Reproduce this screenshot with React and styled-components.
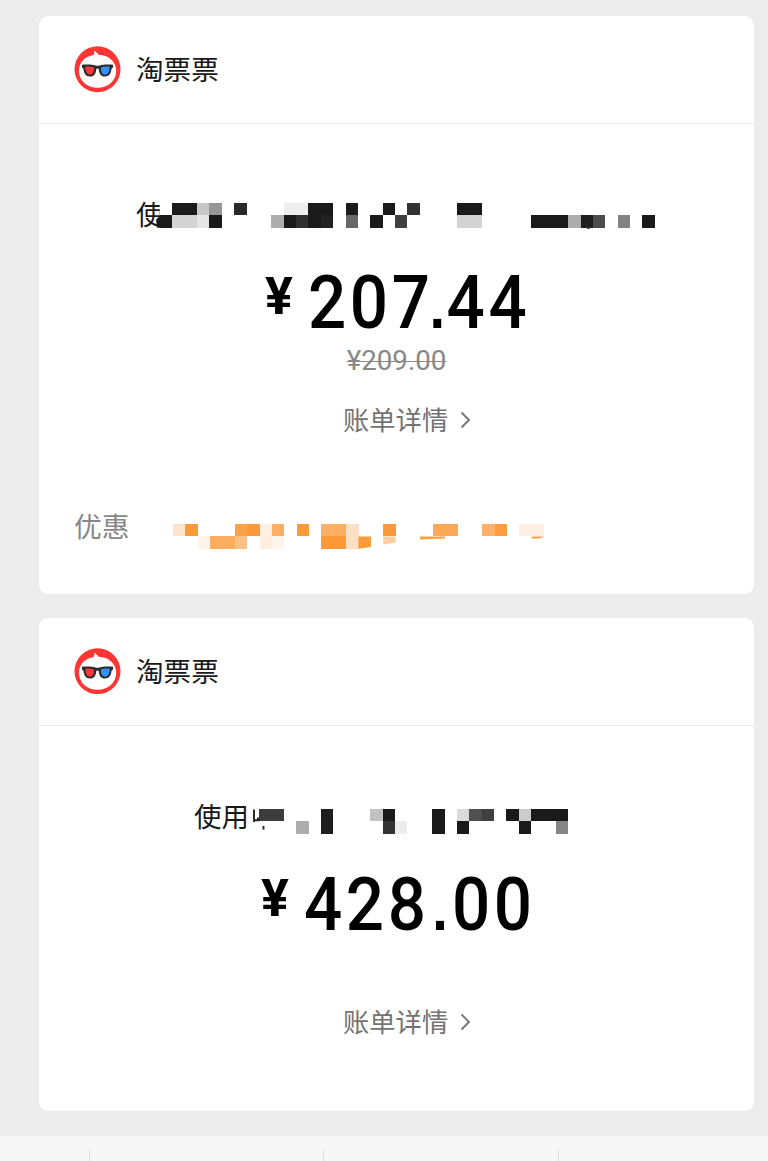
import React from 'react'
import styled, { createGlobalStyle } from 'styled-components'

const GlobalStyle = createGlobalStyle`
    * {
        box-sizing: border-box;
    }

    body {
        margin: 0;
        background: #ececec;
        font-family: "Noto Sans CJK SC", sans-serif;
    }
`

const Page = styled.main`
    display: flex;
    flex-direction: column;
    height: 1161px;
    overflow: hidden;
    background: #ececec;
`

const CardList = styled.div`
    display: flex;
    flex-direction: column;
    gap: 24px;
    height: 1136px;
    padding: 16px 14px 0 39px;
`

const Card = styled.section`
    height: ${props => props.$height}px;
    border-radius: 9px;
    background: #fff;
    overflow: hidden;
`

const CardHeader = styled.header`
    display: flex;
    align-items: center;
    gap: 15px;
    height: 108px;
    padding-left: 35px;
    border-bottom: 1px solid #e8e8e8;
`

const Merchant = styled.h2`
    margin: -3px 0 0;
    color: #191919;
    font-size: 27.6px;
    font-weight: 400;
    line-height: 40px;
`

const Description = styled.div`
    display: flex;
    align-items: center;
    height: 40px;
    margin-top: 69px;
    padding-left: ${props => props.$indent}px;
    color: #191919;
    font-size: 27.5px;
    line-height: 40px;
    white-space: nowrap;
`

const DescriptionMosaic = styled.svg`
    flex: none;
    margin-left: ${props => props.$shift}px;
    margin-top: ${props => props.$drop}px;
    overflow: visible;
`

const Amount = styled.div`
    display: flex;
    align-items: flex-start;
    height: 74px;
    margin-top: 33px;
    padding-left: ${props => props.$indent}px;
    color: #000;
    font-family: Roboto, sans-serif;
    font-weight: 500;
`

const Currency = styled.span`
    width: 43px;
    font-size: 52px;
    font-weight: 700;
    line-height: 61px;
`

const Digits = styled.span`
    font-size: 74.5px;
    line-height: 74px;
    letter-spacing: 4px;
    white-space: nowrap;
    transform: scaleX(0.903);
    transform-origin: left;
`

const Dot = styled.span`
    margin-left: ${props => props.$kerned ? -4.6 : 3}px;
    margin-right: ${props => props.$kerned ? 1.8 : 4.5}px;
    font-family: "Liberation Sans", sans-serif;
    font-size: 62px;
    font-weight: 700;
    line-height: 1;
    letter-spacing: 0;
`

const OldPrice = styled.div`
    height: 43px;
    color: #888;
    font-family: Roboto, sans-serif;
    font-size: 27.7px;
    line-height: 42px;
    text-align: center;
    text-decoration: line-through;
    text-decoration-thickness: 1px;
`

const BillLink = styled.div`
    display: flex;
    align-items: center;
    gap: 12px;
    height: 40px;
    margin-top: ${props => props.$top}px;
    padding-left: 304px;
    color: #737373;
    font-size: 26.3px;
    line-height: 40px;
`

const Arrow = styled.svg`
    margin-top: 1px;
`

const Discount = styled.div`
    display: flex;
    align-items: center;
    gap: 43px;
    height: 40px;
    margin-top: 66px;
    padding-left: 35px;
    color: #888;
    font-size: 27.8px;
    line-height: 40px;
`

const DiscountMosaic = styled.svg`
    flex: none;
    margin-top: 24px;
`

const Footer = styled.footer`
    display: grid;
    grid-template-columns: 90px 234px 235px 1fr;
    height: 25px;
    padding-top: 14px;
    background: #f7f7f7;
`

const FooterItem = styled.div`
    border-right: 1px solid #dedede;

    &:last-child {
        border-right: 0;
    }
`

const CELL = 12.37

// [column, row, columns wide, color]
const firstCells = [
    [1, 0, 2, '#1a1a1a'], [3, 0, 1, '#c8c8c8'], [4, 0, 1, '#969696'], [6, 0, 1, '#2a2a2a'],
    [10, 0, 2, '#eeeeee'], [12, 0, 2, '#1a1a1a'], [15, 0, 1, '#1a1a1a'], [18, 0, 1, '#1a1a1a'],
    [20, 0, 1, '#333333'], [24, 0, 2, '#1a1a1a'],
    [0, 1, 1, '#1a1a1a'], [1, 1, 2, '#d3d3d3'], [3, 1, 1, '#e5e5e5'], [4, 1, 1, '#1a1a1a'],
    [9, 1, 1, '#adadad'], [10, 1, 1, '#1a1a1a'], [11, 1, 1, '#303030'], [12, 1, 1, '#1a1a1a'],
    [13, 1, 1, '#222222'], [15, 1, 1, '#666666'], [17, 1, 1, '#1a1a1a'], [19, 1, 1, '#404040'],
    [24, 1, 2, '#d3d3d3'], [30, 1, 3, '#1a1a1a'], [33, 1, 1, '#adadad'], [34, 1, 1, '#1e1e1e'],
    [35, 1, 1, '#4c4c4c'], [37, 1, 1, '#828282'], [39, 1, 1, '#1a1a1a']
]

const secondCells = [
    [0, 0, 2, '#3c3c3c'], [5, 0, 1, '#1e1e1e'], [9, 0, 1, '#c2c2c2'], [10, 0, 1, '#1a1a1a'],
    [14, 0, 1, '#1a1a1a'], [16, 0, 1, '#dadada'], [17, 0, 1, '#505050'], [18, 0, 1, '#404040'],
    [20, 0, 1, '#1a1a1a'], [21, 0, 1, '#cccccc'], [22, 0, 3, '#1a1a1a'],
    [3, 1, 1, '#adadad'], [5, 1, 1, '#1e1e1e'], [10, 1, 1, '#333333'], [11, 1, 1, '#ededed'],
    [14, 1, 1, '#1a1a1a'], [16, 1, 1, '#1a1a1a'], [21, 1, 1, '#1a1a1a'], [24, 1, 1, '#858585']
]

const discountCells = [
    [0, 0, 1, '#fde4cb'], [1, 0, 1, '#fb9a36'], [5, 0, 1, '#fba248'], [6, 0, 1, '#fb9a38'],
    [7, 0, 1, '#feefe2'], [8, 0, 1, '#fcae62'], [10, 0, 1, '#fb9a36'], [12, 0, 1, '#fbb068'],
    [13, 0, 1, '#fbad60'], [14, 0, 1, '#fde0c4'], [17, 0, 1, '#fb9a3a'], [21, 0, 2, '#fbaa58'],
    [25, 0, 1, '#fcb068'], [26, 0, 1, '#fb9d3e'], [28, 0, 2, '#fef0e2'],
    [2, 1, 1, '#fff4ea'], [3, 1, 2, '#fbae60'], [5, 1, 1, '#fcc084'], [7, 1, 1, '#feefe2'],
    [8, 1, 1, '#fff4ea'], [12, 1, 2, '#fb9a36'], [14, 1, 1, '#fde0c4']
]

const Cells = ({ cells }) => cells.map(([col, row, span, color]) => (
    <rect
        key={`${col}-${row}`}
        x={col * CELL}
        y={row * CELL}
        width={span * CELL + 0.05}
        height={CELL}
        fill={color}
        shapeRendering="crispEdges"
    />
))

const Logo = () => (
    <svg width="47" height="47" viewBox="0 0 47 47">
        <circle cx="23.5" cy="23.2" r="23" fill="#fd3535" />
        <path d="M20 4.800c1.800 1 3.400 2.400 4.600 3.900 10 .4 17.600 6.800 17.600 16 0 9.700-8 17-18.700 17S5 34.400 5 24.700c0-8.700 6.400-14.600 14.600-15.700.9-1.200 1-2.700.4-4.200z" fill="#fff" />
        <path d="M7.800 18.800c5.200-.7 10-.5 13.600.7 1.400.4 2.800.4 4.200 0 3.600-1.200 8.400-1.400 13.600-.7l-.3 3-1.300.8c-.5 4.900-2.400 8-6.500 8-4.700 0-6-3.300-6.400-7.600-.4-.7-2-.7-2.400 0-.4 4.300-1.700 7.600-6.400 7.600-4.100 0-6-3.100-6.500-8l-1.300-.8z" fill="#292b2f" />
        <path d="M11.300 20.700c3-.5 6.300-.3 8.800.7-.1 4.300-1.100 7.100-4.100 7.100-3.400 0-4.600-3.200-4.700-7.800z" fill="#f73838" />
        <path d="M35.700 20.700c-3-.5-6.300-.3-8.800.7.100 4.300 1.100 7.100 4.100 7.100 3.400 0 4.600-3.200 4.700-7.800z" fill="#3491f5" />
    </svg>
)

const Chevron = () => (
    <Arrow width="12" height="18" viewBox="0 0 12 18" fill="none" stroke="#737373" strokeWidth="1.8">
        <path d="M1.500 1.500L9 9l-7.500 7.500" />
    </Arrow>
)

const Header = () => (
    <CardHeader>
        <Logo />
        <Merchant>淘票票</Merchant>
    </CardHeader>
)

const Bill = ({ top }) => (
    <BillLink $top={top}>
        账单详情
        <Chevron />
    </BillLink>
)

const App = () => (
    <>
        <GlobalStyle />
        <Page>
            <CardList>
                <Card $height={578}>
                    <Header />
                    <Description $indent={97}>
                        使
                        <DescriptionMosaic $shift={-6.5} $drop={8} width="500" height="28" viewBox="-3 0 500 28">
                            <rect x="-.3" y="-6" width="4" height="18.400" fill="#fff" />
                            <Cells cells={firstCells} />
                            <path d="M0 12.400v12.300h-3l-1-8z" fill="#1a1a1a" />
                            <path d="M427 24.500h3v1.500h-3z" fill="#555" />
                        </DescriptionMosaic>
                    </Description>
                    <Amount $indent={226}>
                        <Currency>¥</Currency>
                        <Digits>207<Dot $kerned>.</Dot>44</Digits>
                    </Amount>
                    <OldPrice>¥209.00</OldPrice>
                    <Bill top={16} />
                    <Discount>
                        优惠
                        <DiscountMosaic width="380" height="26" viewBox="0 0 380 26">
                            <Cells cells={discountCells} />
                            <path d="M185.500 12.400h12.400v10.500l-12.400 1.900z" fill="#fb9a36" />
                            <path d="M210.300 12.400h12.400v6l-12.400 2z" fill="#fdcda0" />
                            <path d="M247 12.400h25v2.100l-25 1z" fill="#fb9f45" />
                            <path d="M358.700 12.400h12.400c-2 1.600-6 2.300-12.400 2.200z" fill="#fb9f45" />
                        </DiscountMosaic>
                    </Discount>
                </Card>
                <Card $height={493}>
                    <Header />
                    <Description $indent={155}>
                        使用
                        <DescriptionMosaic $shift={3.3} $drop={15} width="330" height="28" viewBox="-7 0 330 28">
                            <Cells cells={secondCells} />
                            <path d="M-5 .5v12.500M-5 11.300h5.500M-1 8.500v3M4.500 17v3.500" fill="none" stroke="#222" strokeWidth="1.900" />
                        </DescriptionMosaic>
                    </Description>
                    <Amount $indent={222}>
                        <Currency>¥</Currency>
                        <Digits>428<Dot>.</Dot>00</Digits>
                    </Amount>
                    <Bill top={59} />
                </Card>
            </CardList>
            <Footer>
                <FooterItem />
                <FooterItem />
                <FooterItem />
                <FooterItem />
            </Footer>
        </Page>
    </>
)

export default App
